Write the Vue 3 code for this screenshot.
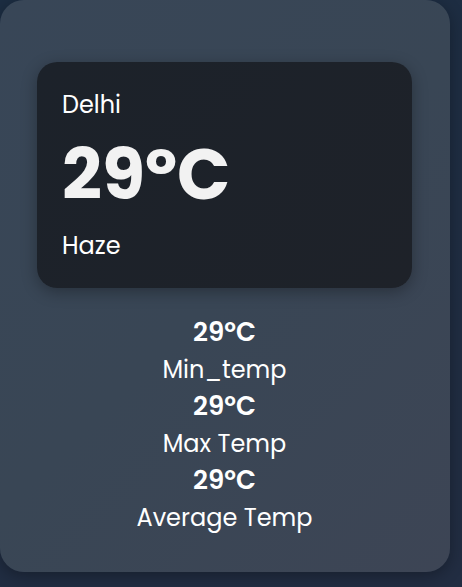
<script setup>
const current = { city: 'Delhi', temp: '29ºC', condition: 'Haze' }

const stats = [
  { label: 'Min_temp', value: '29ºC' },
  { label: 'Max Temp', value: '29ºC' },
  { label: 'Average Temp', value: '29ºC' },
]
</script>

<template>
  <main class="page">
    <section class="card">
      <article class="current">
        <p class="text">{{ current.city }}</p>
        <h1 class="temp">{{ current.temp }}</h1>
        <p class="text">{{ current.condition }}</p>
      </article>
      <dl class="stats">
        <div v-for="stat in stats" :key="stat.label" class="stat">
          <dt class="label">{{ stat.label }}</dt>
          <dd class="value">{{ stat.value }}</dd>
        </div>
      </dl>
    </section>
  </main>
</template>

<style>
body {
  background: #1f2c3f;
}
</style>

<style scoped>
.page {
  box-sizing: border-box;
  min-height: 100vh;
  padding: 0 12px 15px 0;
  overflow: hidden;
  background: linear-gradient(160deg, #1c2d42, #222d42);
  color: #fff;
  font-family: Poppins, Inter, sans-serif;
  font-size: 24px;
  line-height: 37px;
}

.card {
  padding: 62px 38px 36px 37px;
  border-radius: 24px;
  background: linear-gradient(135deg, #384657, #394655 50%, #3d4555);
  box-shadow: 0 4px 16px rgba(0, 0, 0, 0.3);
}

.current {
  padding: 24px 25px;
  border-radius: 20px;
  background: linear-gradient(135deg, #1c222a, #1e2229);
  box-shadow: 0 4px 16px rgba(0, 0, 0, 0.3);
}

.text,
.temp,
.stats,
.value {
  margin: 0;
}

.temp {
  color: #f2f2f2;
  font-size: 70px;
  font-weight: 700;
  line-height: 104px;
}

.stats {
  padding-top: 26px;
  text-align: center;
}

.stat {
  display: flex;
  flex-direction: column-reverse;
}

.value {
  font-size: 26px;
  font-weight: 600;
}
</style>
